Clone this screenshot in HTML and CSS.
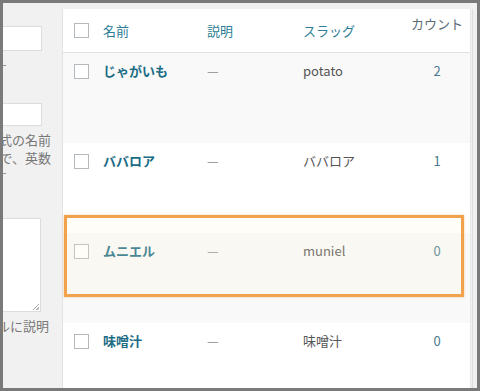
FILE: index.html
```html
<!DOCTYPE html>
<html lang="ja">
<head>
  <meta charset="UTF-8" />
  <title>タグ</title>
  <link rel="stylesheet" href="styles.css">
</head>
<body>
  <div class="frame">
    <!-- 左：新規追加フォーム（切れている） -->
    <div class="side">
      <div class="side-inner">
        <div class="field"></div>
        <p class="note note-cut">サイト上に表示される名前です</p>
        <div class="field field-sm"></div>
        <p class="note note-desc">“スラッグ” は URL に適した形式の名前</p>
        <p class="note">通常はすべて半角小文字で、英数</p>
        <p class="note note-tail">字とハイフンのみが使われます</p>
        <div class="textarea"><span class="grip"></span></div>
        <p class="note note-last">テーマによってはタイトルに説明</p>
      </div>
    </div>

    <!-- 右：一覧テーブル -->
    <div class="list">
      <div class="row head">
        <div class="cell check"><span class="box"></span></div>
        <div class="cell col-link">名前</div>
        <div class="cell col-link">説明</div>
        <div class="cell col-link">スラッグ</div>
        <div class="cell count-head">カウント</div>
      </div>
      <div class="row alt">
        <div class="cell check"><span class="box"></span></div>
        <div class="cell name">じゃがいも</div>
        <div class="cell dash">—</div>
        <div class="cell slug">potato</div>
        <div class="cell count">2</div>
      </div>
      <div class="row">
        <div class="cell check"><span class="box"></span></div>
        <div class="cell name">ババロア</div>
        <div class="cell dash">—</div>
        <div class="cell slug">ババロア</div>
        <div class="cell count">1</div>
      </div>
      <div class="row alt">
        <div class="cell check"><span class="box"></span></div>
        <div class="cell name">ムニエル</div>
        <div class="cell dash">—</div>
        <div class="cell slug">muniel</div>
        <div class="cell count">0</div>
      </div>
      <div class="row">
        <div class="cell check"><span class="box"></span></div>
        <div class="cell name">味噌汁</div>
        <div class="cell dash">—</div>
        <div class="cell slug">味噌汁</div>
        <div class="cell count">0</div>
      </div>
    </div>

    <div class="edge"></div>

    <!-- 注目枠 -->
    <div class="highlight"></div>
  </div>
</body>
</html>
```

FILE: styles.css
```css
body {
  margin: 0;
  font-family: "Noto Sans CJK JP", "Noto Sans", sans-serif;
  font-size: 13px;
  color: #555;
}
.frame {
  position: relative;
  width: 480px;
  height: 391px;
  box-sizing: border-box;
  border: 3px solid #7a7a7a;
  background: #f1f1f1;
  display: flex;
  overflow: hidden;
}
.side {
  width: 59px;
  flex-shrink: 0;
  overflow: hidden;
}
.side-inner {
  width: 237px;
  margin-left: -198px;
}
.field {
  margin-top: 23px;
  height: 25px;
  box-sizing: border-box;
  background: #fff;
  border: 1px solid #dcdcdc;
}
.field-sm {
  margin-top: 26px;
  height: 23px;
}
.note {
  margin: 0 -9px 0 0;
  line-height: 18px;
  color: #777;
  white-space: nowrap;
  text-align: right;
}
.note-cut {
  margin-top: 8px;
  margin-right: 35px;
  color: #999;
}
.note-desc {
  margin-top: 5px;
}
.note-tail {
  margin-right: 35px;
  color: #999;
}
.note-last {
  margin-top: 5px;
  margin-right: -7px;
}
.textarea {
  margin-top: 33px;
  height: 94px;
  box-sizing: border-box;
  margin-right: 1px;
  background: #fff;
  border: 1px solid #dcdcdc;
  display: flex;
  justify-content: flex-end;
  align-items: flex-end;
}
.grip {
  width: 6px;
  height: 6px;
  margin: 0 1px 1px 0;
  background: linear-gradient(135deg, transparent 45%, #aaa 45%, #aaa 55%, transparent 55%, transparent 75%, #aaa 75%, #aaa 85%, transparent 85%);
}
.list {
  width: 407px;
  flex-shrink: 0;
  margin-top: 6px;
  border-left: 1px solid #e2e2e2;
  border-right: 1px solid #e8e8e8;
  background: #fff;
}
.row {
  display: grid;
  grid-template-columns: 40px 104px 96px 108px 52px;
  height: 90px;
  box-sizing: border-box;
  padding-top: 8px;
  align-items: start;
  line-height: 20px;
}
.row.alt {
  background: #f9f9f9;
}
.row.head {
  height: 44px;
  padding-top: 0;
  align-items: center;
  border-bottom: 1px solid #e1e1e1;
  background: #fff;
}
.check {
  padding-left: 11px;
  padding-top: 3px;
  height: 15px;
}
.head .check {
  padding-top: 0;
}
.box {
  display: block;
  width: 15px;
  height: 15px;
  box-sizing: border-box;
  border: 1px solid #b4b9be;
  background: #fff;
}
.col-link {
  color: #2c7d95;
}
.count-head {
  align-self: start;
  padding-top: 5px;
  color: #5b6c75;
  text-align: center;
}
.name {
  color: #1b6c84;
  font-weight: bold;
}
.dash {
  color: #8a8a8a;
}
.slug {
  color: #555;
}
.count {
  text-align: center;
  color: #4b7a8e;
}
.edge {
  width: 1px;
  margin-left: 1px;
  margin-top: 6px;
  background: #dedede;
}
.highlight {
  position: absolute;
  left: 61px;
  top: 212px;
  width: 400px;
  height: 82px;
  box-sizing: border-box;
  border: 3px solid #f0a34c;
  background: rgba(255, 244, 215, 0.2);
  box-shadow: 0 0 2px rgba(240, 163, 76, 0.6);
}
```
